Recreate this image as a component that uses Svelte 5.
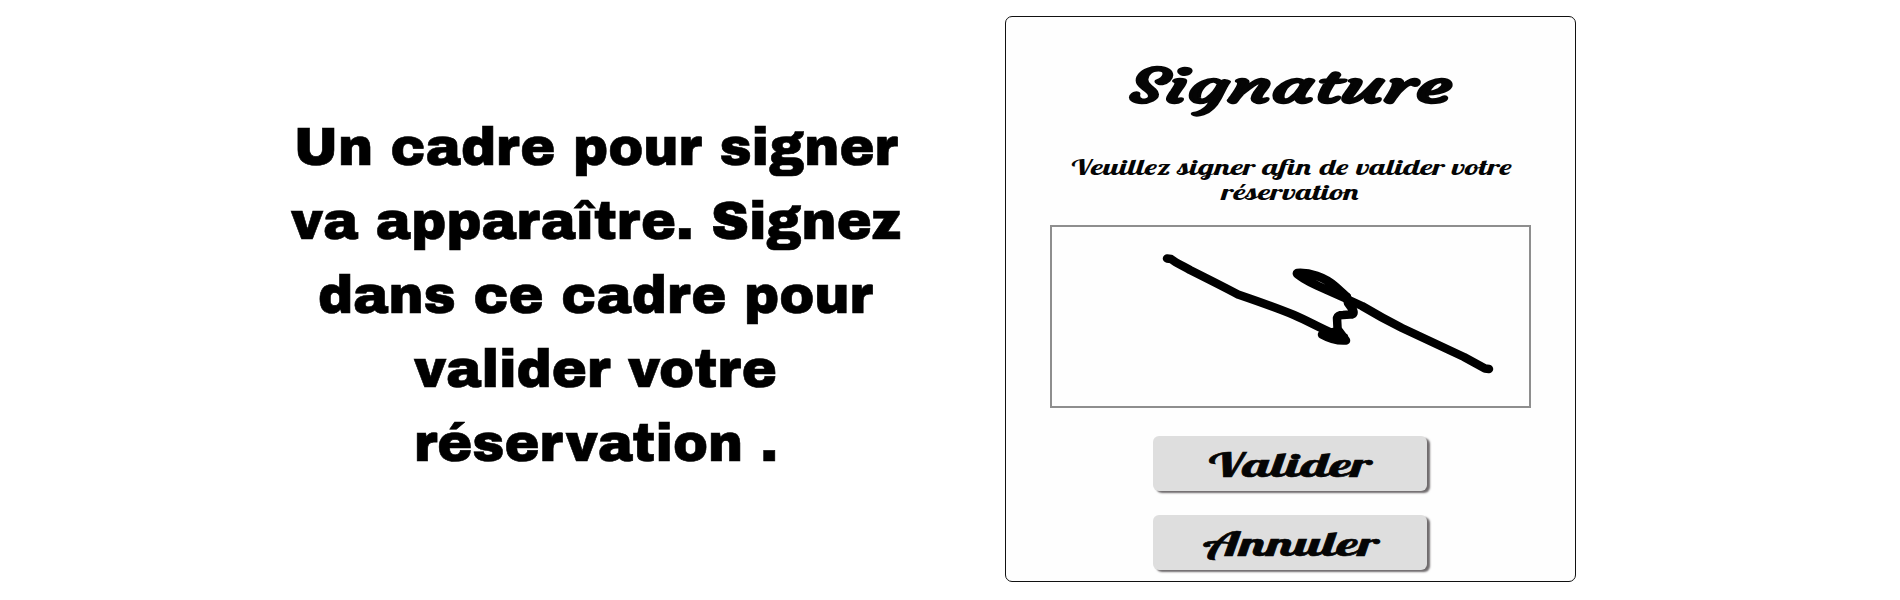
<script>
  const lines = [
    { text: 'Un cadre pour signer', width: 604 },
    { text: 'va apparaître. Signez', width: 610 },
    { text: 'dans ce cadre pour', width: 555 },
    { text: 'valider votre', width: 363 },
    { text: 'réservation .', width: 364 }
  ];
</script>

{#snippet label(text, width, height, baseline, kind)}
  <svg class="label {kind}" {width} {height} viewBox="0 0 {width} {height}">
    <text x="0" y={baseline} textLength={width} lengthAdjust="spacingAndGlyphs">{text}</text>
  </svg>
{/snippet}

<main>
  <section class="intro">
    {#each lines as line}
      {@render label(line.text, line.width, 74, 54, 'heavy')}
    {/each}
  </section>

  <section class="card">
    {@render label('Signature', 323, 60, 42, 'title')}
    <div class="hint">
      {@render label('Veuillez signer afin de valider votre', 442, 25, 19, 'small')}
      {@render label('réservation', 139, 25, 18.5, 'small')}
    </div>
    <div class="pad">
      <svg width="477" height="180" viewBox="1052 227 477 180">
        <g class="ink">
          <path d="M1167 258.5 L1171 259 C1176 263 1183 266 1190 270 C1208 279 1224 287 1238 294.5 C1257 301 1277 308 1294 315 C1308 321 1318 327 1334 334" />
          <path d="M1322 334.5 C1330 339 1340 341 1346 340.5 L1339 331 L1329 333 L1344 337" />
          <path d="M1338 337 L1337 318 Q1338 315 1343 315 L1350 314.5 Q1355 315 1353 310 L1348 303 L1347 297" />
          <path d="M1347 297 L1336 287 C1325 277 1309 272 1297 273 C1295 274 1310 282.5 1317 285.5 L1349 300 L1362 306 C1377 315 1390 322 1402 328 L1464 357 L1485 368.5 L1489 369" />
        </g>
      </svg>
    </div>
    <button>{@render label('Valider', 163, 54, 40, 'action')}</button>
    <button>{@render label('Annuler', 176, 54, 40, 'action')}</button>
  </section>
</main>

<style>
  :global(body) {
    background: #fff;
  }
  main {
    display: flex;
    box-sizing: border-box;
    width: 1900px;
    height: 600px;
    overflow: hidden;
    background: #fff;
  }
  .label {
    display: block;
    overflow: visible;
    flex: none;
  }
  .intro {
    box-sizing: border-box;
    width: 1005px;
    padding: 111px 0 0 186px;
    display: flex;
    flex-direction: column;
    align-items: center;
  }
  .heavy text {
    font: 400 53px 'Archivo Black', 'Liberation Sans', sans-serif;
    fill: #000;
    stroke: #000;
    stroke-width: 0.6px;
  }
  .card {
    box-sizing: border-box;
    width: 571px;
    height: 566px;
    margin-top: 16px;
    padding-top: 44px;
    border: 1.5px solid #111;
    border-radius: 7px;
    display: flex;
    flex-direction: column;
    align-items: center;
    background: #fefefe;
  }
  .title text {
    font: 400 48px Courgette, 'Lobster Two', 'Liberation Serif', serif;
    fill: #050505;
    stroke: #050505;
    stroke-width: 2.4px;
  }
  .small text {
    font: italic 700 22.5px 'Lobster Two', 'Liberation Serif', serif;
    fill: #050505;
  }
  .action text {
    font: 400 34px Lobster, 'Liberation Serif', serif;
    fill: #050505;
    stroke: #050505;
    stroke-width: 0.6px;
  }
  .hint {
    display: flex;
    flex-direction: column;
    align-items: center;
    margin-top: 35px;
  }
  .pad {
    box-sizing: border-box;
    width: 481px;
    height: 183px;
    margin-top: 19px;
    border: 2px solid #8e8e8e;
    background: #fefefe;
  }
  .pad svg {
    display: block;
  }
  .ink {
    fill: none;
    stroke: #000;
    stroke-width: 8.5px;
    stroke-linecap: round;
    stroke-linejoin: round;
  }
  button {
    box-sizing: border-box;
    width: 274px;
    height: 55px;
    margin: 28px 2px 0 0;
    padding: 0 0 0 2px;
    border: 0;
    border-radius: 6px;
    display: flex;
    justify-content: center;
    align-items: center;
    background: #dedede;
    box-shadow: 3px 2px 2px #6f6b6d;
  }
  button + button {
    margin-top: 24px;
  }
</style>
